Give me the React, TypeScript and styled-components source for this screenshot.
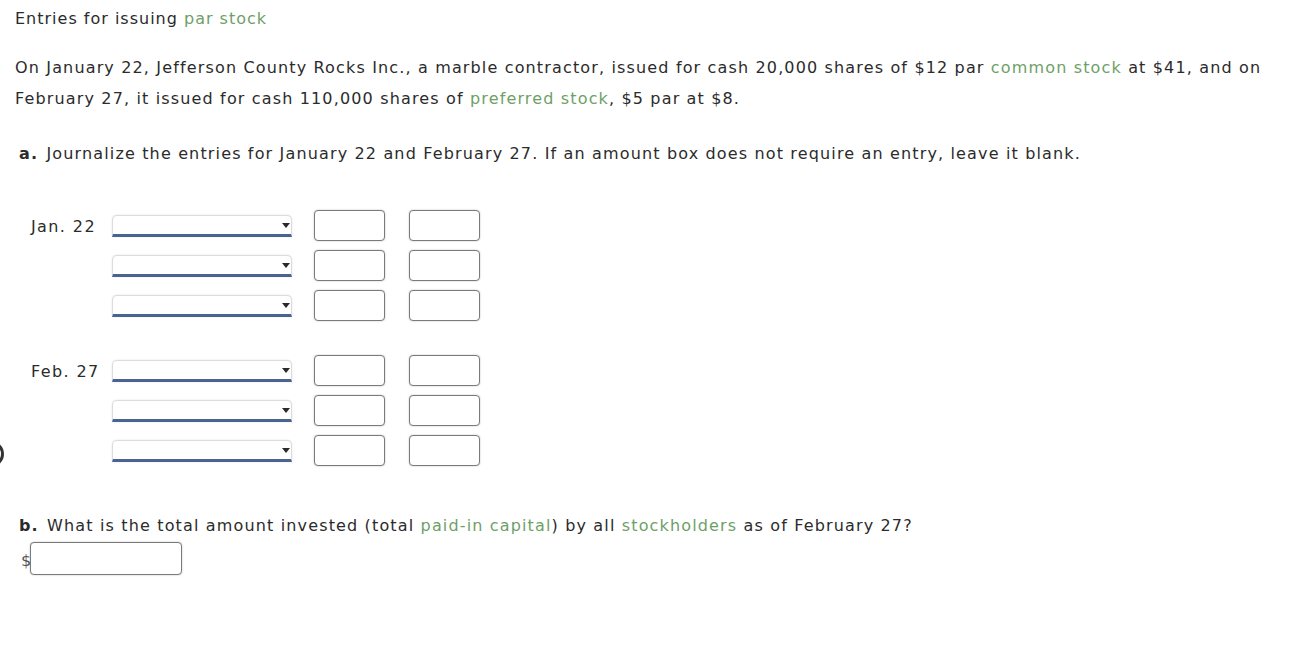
import React from "react";
import styled, { createGlobalStyle } from "styled-components";

const Global = createGlobalStyle`
  html, body { margin: 0; padding: 0; background: #fff; }
  body { font-family: Verdana, "DejaVu Sans", sans-serif; font-size: 16px; color: #2b2b2b; letter-spacing: 1.15px; }
  * { box-sizing: border-box; }
`;

const Page = styled.div`
  position: relative;
  width: 1305px;
  height: 646px;
  padding: 9px 0 0 15px;
  overflow: hidden;
`;

const Title = styled.div`
  line-height: 20px;
  letter-spacing: 1px;
`;

const Term = styled.span`
  color: #6f9f68;
`;

const Para = styled.p`
  margin: 23px 0 0 0;
  line-height: 31px;
  max-width: 1275px;
`;

const Question = styled.div<{ $top: number }>`
  margin-top: ${(p) => p.$top}px;
  padding-left: 4px;
  line-height: 20px;
`;

const Bold = styled.b`
  font-weight: bold;
  margin-right: 2px;
`;

const Journal = styled.div`
  margin-top: 46px;
  display: flex;
  flex-direction: column;
  gap: 34px;
`;

const Entry = styled.div`
  display: flex;
  flex-direction: column;
  gap: 9px;
`;

const Row = styled.div`
  display: flex;
  align-items: center;
  height: 31px;
`;

const DateLabel = styled.div`
  width: 97px;
  padding-left: 16px;
  line-height: 20px;
  margin-top: 3px;
  letter-spacing: 1.4px;
`;

const Select = styled.div`
  position: relative;
  width: 180px;
  height: 22px;
  margin-top: 1px;
  background: #fff;
  border: 1px solid #dcdcdc;
  border-bottom: 3px solid #4a638f;
  border-radius: 5px 5px 0 0;
  box-shadow: 0 0 2px rgba(0, 0, 0, 0.12);
  margin-right: 22px;
`;

const Arrow = styled.span`
  position: absolute;
  right: 1px;
  top: 7px;
  width: 0;
  height: 0;
  border-left: 4px solid transparent;
  border-right: 4px solid transparent;
  border-top: 5px solid #2a2a2a;
`;

const Amount = styled.div<{ $w?: number; $h?: number }>`
  width: ${(p) => p.$w ?? 71}px;
  height: ${(p) => p.$h ?? 31}px;
  border: 1px solid #7a7a7a;
  border-radius: 4px;
  background: #fff;
  box-shadow: 0 0 2px rgba(0, 0, 0, 0.25);
  margin-right: 24px;
`;

const Answer = styled.div`
  display: flex;
  align-items: center;
  margin-top: 6px;
  padding-left: 6px;
`;

const Dollar = styled.span`
  font-size: 16px;
  color: #555;
  margin-right: -2px;
  margin-top: 4px;
`;

const Mark = styled.div`
  position: absolute;
  left: -22px;
  top: 441px;
  width: 26px;
  height: 26px;
  border: 3px solid #333;
  border-radius: 50%;
`;

const Line = ({ label }: { label?: string }) => (
  <Row>
    <DateLabel>{label ?? ""}</DateLabel>
    <Select>
      <Arrow />
    </Select>
    <Amount />
    <Amount />
  </Row>
);

export default function App() {
  return (
    <>
      <Global />
      <Page>
        <Mark />
        <Title>
          Entries for issuing <Term>par stock</Term>
        </Title>
        <Para>
          On January 22, Jefferson County Rocks Inc., a marble contractor, issued for cash 20,000 shares of $12 par{" "}
          <Term>common stock</Term> at $41, and on February 27, it issued for cash 110,000 shares of{" "}
          <Term>preferred stock</Term>, $5 par at $8.
        </Para>
        <Question $top={30}>
          <Bold>a.</Bold> Journalize the entries for January 22 and February 27. If an amount box does not require an
          entry, leave it blank.
        </Question>
        <Journal>
          <Entry>
            <Line label="Jan. 22" />
            <Line />
            <Line />
          </Entry>
          <Entry>
            <Line label="Feb. 27" />
            <Line />
            <Line />
          </Entry>
        </Journal>
        <Question $top={50}>
          <Bold>b.</Bold> What is the total amount invested (total <Term>paid-in capital</Term>) by all{" "}
          <Term>stockholders</Term> as of February 27?
        </Question>
        <Answer>
          <Dollar>$</Dollar>
          <Amount $w={152} $h={33} />
        </Answer>
      </Page>
    </>
  );
}
